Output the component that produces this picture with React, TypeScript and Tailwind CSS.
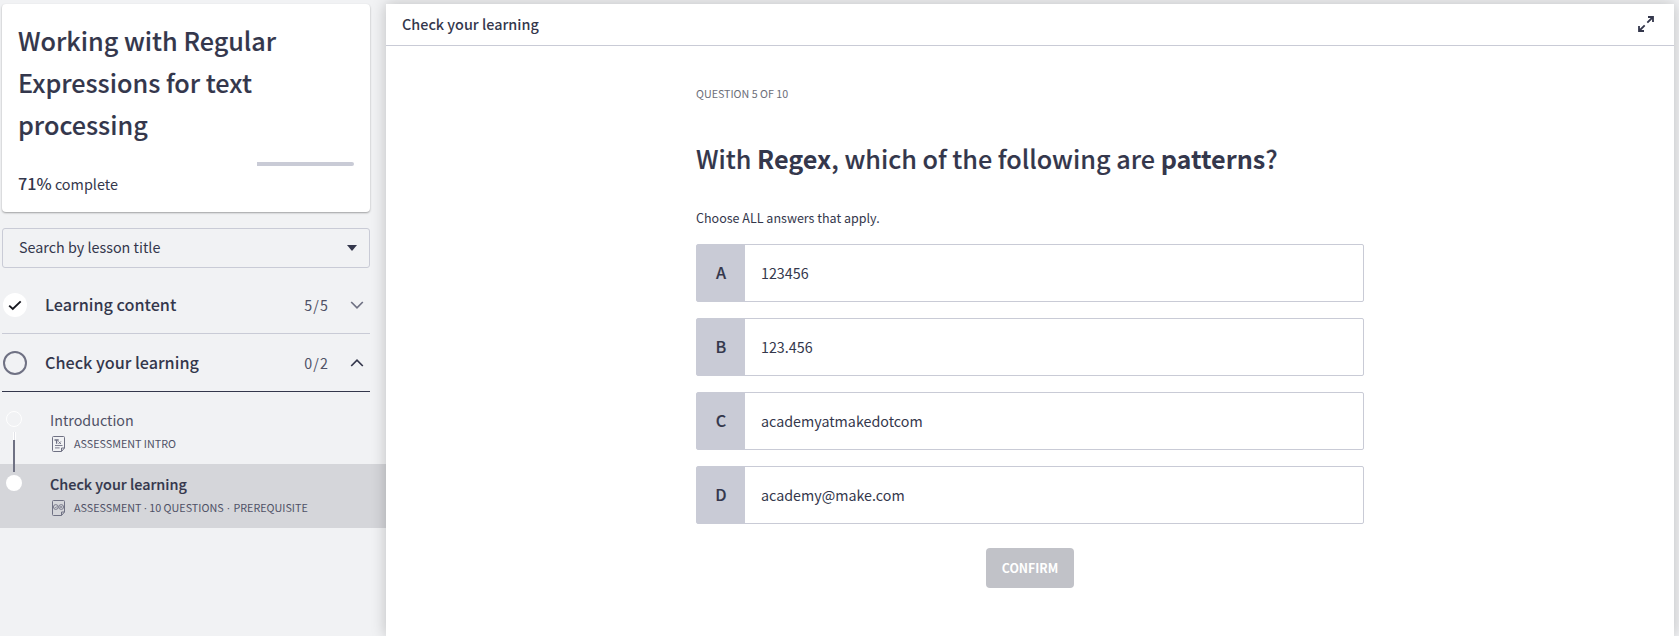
import React from "react";

const answers = [
  { letter: "A", text: "123456" },
  { letter: "B", text: "123.456" },
  { letter: "C", text: "academyatmakedotcom" },
  { letter: "D", text: "academy@make.com" },
];

function Chevron({ up = false }: { up?: boolean }) {
  return (
    <svg width="14" height="10" viewBox="0 0 14 10" fill="none" stroke={up ? "#34374c" : "#6f7183"} strokeWidth="1.7">
      <path d={up ? "M1.2 8 L7 2.2 L12.8 8" : "M1.2 2 L7 7.8 L12.8 2"} />
    </svg>
  );
}

function PageOutline() {
  return (
    <>
      <path d="M1.5 .5H11.5Q12.5 .5 12.5 1.5V12L9.5 15.5H1.5Q.5 15.5 .5 14.5V1.5Q.5 .5 1.5 .5Z" />
      <path d="M12.5 12H9.5V15.3" />
    </>
  );
}

function IntroIcon() {
  return (
    <svg width="14" height="16" viewBox="0 0 14 16" fill="none" stroke="#6f7183" strokeWidth="1">
      <PageOutline />
      <path d="M2.5 4H6.7M4.6 4V7.8" strokeWidth="1.3" />
      <path d="M6.4 5.4L9 8M9 5.4L6.4 8" strokeWidth=".9" />
      <path d="M3 9.5H10.5M3 11.9H7.6" strokeWidth=".9" />
    </svg>
  );
}

function AssessmentIcon() {
  return (
    <svg width="14" height="16" viewBox="0 0 14 16" fill="none" stroke="#6f7183" strokeWidth="1">
      <PageOutline />
      <circle cx="3.8" cy="7" r="2.4" strokeWidth=".9" />
      <circle cx="9.2" cy="7" r="2.4" strokeWidth=".9" />
      <path d="M2.8 7L3.7 7.9L5.2 6.2M8.2 6L10.2 8M10.2 6L8.2 8" strokeWidth=".7" />
    </svg>
  );
}

function ExpandIcon() {
  return (
    <svg width="16" height="16" viewBox="0 0 16 16" fill="none" stroke="#34374c" strokeWidth="1.8">
      <path d="M10 1H15V6M15 1L9.3 6.7M6 15H1V10M1 15L6.7 9.3" />
    </svg>
  );
}

function Dot() {
  return <span className="mx-[2.5px] font-['Open_Sans',sans-serif]">·</span>;
}

function Sidebar() {
  return (
    <aside className="w-[386px] shrink-0 pt-1">
      <div className="ml-0.5 h-[208px] w-[368px] rounded bg-white px-4 pt-[15px] shadow-[0_1px_2px_rgba(0,0,0,0.35)]">
        <h1 className="text-[25.2px] leading-[42px] font-medium [-webkit-text-stroke:0.12px_#34374c]">
          Working with Regular
          <br />
          Expressions for text
          <br />
          processing
        </h1>
        <div className="mt-[17px] flex h-1 justify-end">
          <div className="w-[97px] rounded-r-sm bg-[#c9cbd6]" />
        </div>
        <div className="mt-1.5 text-[14.4px] leading-6">
          <span className="text-[16.2px] leading-none font-medium">71%</span> complete
        </div>
      </div>

      <div className="mt-4 ml-0.5 flex h-10 w-[368px] items-center justify-between rounded-[3px] border border-[#c9cbd6] pr-3 pl-4 text-[14.35px] leading-6">
        <span className="-mt-0.5">Search by lesson title</span>
        <svg width="10" height="6" viewBox="0 0 10 6" fill="#34374c">
          <path d="M0 0H10L5 6Z" />
        </svg>
      </div>

      <div className="mt-2 ml-0.5 flex h-[58px] w-[368px] items-center border-b border-[#c9cbd6] pr-1.5 pl-px">
        <span className="flex size-6 items-center justify-center rounded-full bg-white">
          <svg width="14" height="12" viewBox="0 0 14 12" fill="none" stroke="#16171f" strokeWidth="1.9">
            <path d="M1.2 6.6L4.8 10L12.7 2.4" />
          </svg>
        </span>
        <span className="-mt-0.5 ml-[18px] flex-1 text-[16.2px] leading-6 font-medium">Learning content</span>
        <span className="mr-[21px] text-[14.25px] tracking-[1.1px] text-[#4f5166]">5/5</span>
        <Chevron />
      </div>
      <div className="ml-0.5 flex h-[58px] w-[368px] items-center border-b border-[#34374c] pr-1.5 pl-px">
        <span className="size-6 rounded-full border-2 border-[#6f7183]" />
        <span className="-mt-0.5 ml-[18px] flex-1 text-[16.2px] leading-6 font-medium">Check your learning</span>
        <span className="mr-[21px] text-[14.25px] tracking-[1.1px] text-[#4f5166]">0/2</span>
        <Chevron up />
      </div>

      <div className="mt-2 flex h-16 pl-1.5">
        <div className="flex w-4 flex-col items-center pt-[11px]">
          <span className="size-4 rounded-full border border-white" />
          <span className="mt-[5px] h-2 w-[3px] border-x border-white bg-[#e2e3e8]" />
          <span className="h-6 w-0.5 bg-[#6f7183]" />
        </div>
        <div className="pt-2 pl-7">
          <div className="text-[14.3px] leading-6 text-[#4f5166]">Introduction</div>
          <div className="mt-1 flex h-4 items-center pl-0.5 text-[10.75px] leading-4 text-[#4f5166]">
            <IntroIcon />
            <span className="ml-2">ASSESSMENT INTRO</span>
          </div>
        </div>
      </div>
      <div className="flex h-16 bg-[#d5d6da] pl-1.5">
        <div className="flex w-4 flex-col items-center">
          <span className="h-2 w-0.5 bg-[#6f7183]" />
          <span className="mt-[3px] size-4 rounded-full bg-white" />
        </div>
        <div className="pt-2 pl-7">
          <div className="text-[14.4px] leading-6 font-medium [-webkit-text-stroke:0.15px_#34374c]">Check your learning</div>
          <div className="mt-1 flex h-4 items-center pl-0.5 text-[10.75px] leading-4 text-[#4f5166]">
            <AssessmentIcon />
            <span className="ml-2">ASSESSMENT</span>
            <Dot />
            <span>10 QUESTIONS</span>
            <span className="mx-px">
              <Dot />
            </span>
            <span>PREREQUISITE</span>
          </div>
        </div>
      </div>
    </aside>
  );
}

export default function App() {
  return (
    <div className="flex h-[636px] w-full overflow-hidden bg-[#f1f2f4] font-['Noto_Sans_CJK_SC','Noto_Sans',sans-serif] text-[#34374c]">
      <Sidebar />
      <main className="z-10 mt-1 mr-[5px] flex-1 bg-white shadow-[0_0_14px_rgba(0,0,0,0.22)]">
        <header className="flex h-[42px] items-center justify-between border-b border-[#c9cbd6] pr-5 pl-4">
          <span className="-mt-px text-[14.4px] leading-6 font-medium">Check your learning</span>
          <span className="-mt-px">
            <ExpandIcon />
          </span>
        </header>
        <section className="ml-[310px] w-[668px] pt-10">
          <div className="text-[10.7px] leading-4 text-[#6b6d78]">QUESTION 5 OF 10</div>
          <h2 className="mt-[35px] text-[25.2px] leading-[42px] font-medium whitespace-nowrap [-webkit-text-stroke:0.12px_#34374c]">
            With <b className="font-bold [-webkit-text-stroke:0]">Regex</b>, which of the following are{" "}
            <b className="font-bold [-webkit-text-stroke:0]">patterns</b>?
          </h2>
          <p className="mt-[29px] text-[12.52px] leading-5">Choose ALL answers that apply.</p>
          <div className="mt-4 flex flex-col gap-4">
            {answers.map((a) => (
              <div key={a.letter} className="flex h-[58px] rounded-xs border border-[#c9cbd6]">
                <span className="flex w-12 items-center justify-center bg-[#c9cbd6] pb-0.5 text-[16.2px] leading-6 font-medium [-webkit-text-stroke:0.15px_#34374c]">{a.letter}</span>
                <span className="flex items-center pl-4 text-[14.3px] leading-6">{a.text}</span>
              </div>
            ))}
          </div>
          <div className="mt-6 flex justify-center">
            <button className="h-10 w-[88px] rounded bg-[#c1c2c8] text-[12.3px] leading-5 font-bold text-white">CONFIRM</button>
          </div>
        </section>
      </main>
    </div>
  );
}
